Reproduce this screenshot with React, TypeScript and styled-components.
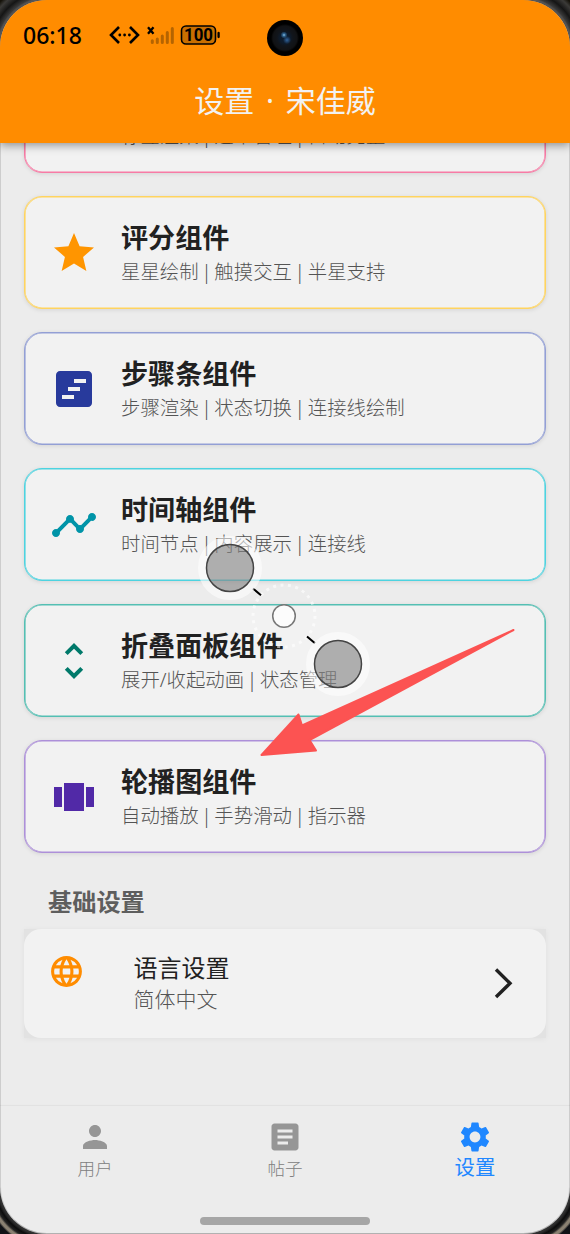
import React from 'react';
import styled, { createGlobalStyle } from 'styled-components';

const Global = createGlobalStyle`
  * { box-sizing: border-box; }
  body { margin: 0; font-family: "Noto Sans", "Noto Sans CJK SC", sans-serif; }
`;

const Device = styled.div`
  position: relative;
  width: 570px;
  height: 1234px;
  overflow: hidden;
  background:
    radial-gradient(circle at 49px 49px, transparent 49px, #777 50px, #3a3a3a 53px, #151515 58px, #3b3a38 64px, #15120a 68px) 0 0 / 49px 49px no-repeat,
    radial-gradient(circle at 0 49px, transparent 49px, #777 50px, #3a3a3a 53px, #151515 58px, #3b3a38 64px, #15120a 68px) 100% 0 / 49px 49px no-repeat,
    radial-gradient(circle at 49px 0, transparent 48px, #444 50px, #0c0c0c 54px, #222 57px, #8a8172 59px, #8a8172 61px, #111317 63px) 0 100% / 49px 49px no-repeat,
    radial-gradient(circle at 0 0, transparent 48px, #444 50px, #0c0c0c 54px, #222 57px, #8a8172 59px, #8a8172 61px, #111317 63px) 100% 100% / 49px 49px no-repeat,
    #777;
`;

const Screen = styled.div`
  display: flex;
  flex-direction: column;
  width: 570px;
  height: 1234px;
  border-radius: 47px;
  overflow: hidden;
  background: #ececec;
  box-shadow: 0 0 3px #111;
`;

const ScreenEdge = styled.div`
  position: absolute;
  inset: 0;
  border: 1px solid rgba(0, 0, 0, 0.25);
  border-left-color: rgba(0, 0, 0, 0.13);
  border-right-color: rgba(0, 0, 0, 0.13);
  border-radius: 47px;
  pointer-events: none;
`;

const Header = styled.header`
  position: relative;
  z-index: 1;
  flex: none;
  height: 143px;
  background: #ff8c00;
  box-shadow: 0 2px 9px rgba(0, 0, 0, 0.42);
`;

const StatusBar = styled.div`
  display: flex;
  align-items: center;
  height: 70px;
  padding-left: 23px;
`;

const Clock = styled.span`
  width: 86px;
  margin-top: -1px;
  font: 500 23px/30px "Noto Sans", sans-serif;
  color: #000;
`;

const StatusIcons = styled.svg`
  display: block;
  width: 114px;
  height: 30px;
  font: 700 18px Roboto, sans-serif;
`;

const Camera = styled.div`
  width: 36px;
  height: 36px;
  margin: 5px 0 0 43.5px;
  border-radius: 50%;
  background:
    radial-gradient(circle at 17px 15px, #8fc4e8 0, #2e618c 1.5px, transparent 3.5px),
    radial-gradient(circle at 20px 20px, #31639b 0, transparent 4px),
    radial-gradient(circle, #0d1b2c 0 5px, #11151b 8px, #111214 12px, #000 14px);
`;

const Title = styled.h1`
  margin: 0;
  font-size: 30px;
  line-height: 62px;
  font-weight: 400;
  text-align: center;
  word-spacing: 4px;
  color: #f2f2f2;
`;

const Content = styled.main`
  flex: 1;
  min-height: 0;
  overflow: hidden;
  padding: 0 24px;
`;

const CardList = styled.div`
  display: flex;
  flex-direction: column;
  gap: 23px;
  margin-top: -83px;
`;

const Card = styled.section<{ $line: string }>`
  display: flex;
  align-items: center;
  height: 113px;
  padding: 0 25px;
  border: 1px solid ${(p) => p.$line};
  border-radius: 18px;
  background: #f2f2f2;
  box-shadow: inset 0 0 0 0.6px ${(p) => p.$line}, 0 1px 4px rgba(0, 0, 0, 0.1);
`;

const Glyph = styled.svg<{ $size: number }>`
  display: block;
  flex: none;
  width: ${(p) => p.$size}px;
  height: ${(p) => p.$size}px;
  fill: ${(p) => p.color};
`;

const CardText = styled.div`
  margin-left: 23px;
  padding-top: 1px;
  white-space: nowrap;
`;

const CardTitle = styled.h2`
  margin: 0;
  font-size: 27.1px;
  line-height: 36px;
  font-weight: 700;
  color: #212121;
`;

const CardSub = styled.p`
  margin: 1px 0 0;
  font-size: 19.4px;
  line-height: 30px;
  font-weight: 300;
  word-spacing: -2.4px;
  color: #545454;
`;

const SectionTitle = styled.h3`
  margin: 31px 0 0 24px;
  font-size: 24.2px;
  line-height: 36px;
  font-weight: 700;
  color: #5e5e5e;
`;

const SettingPlate = styled.div`
  margin-top: 9px;
  background: #e2e2e2;
  box-shadow: 0 1px 6px rgba(0, 0, 0, 0.05);
`;

const SettingRow = styled.div`
  display: flex;
  align-items: center;
  height: 109px;
  padding: 0 33px 0 24px;
  border-radius: 17px;
  background: #f2f2f2;
`;

const GlobeBox = styled.div`
  width: 85.5px;
  padding-bottom: 25px;
`;

const SettingText = styled.div`
  flex: 1;
  padding-bottom: 1px;
`;

const SettingName = styled.div`
  font-size: 24px;
  line-height: 32px;
  color: #212121;
`;

const SettingValue = styled.div`
  font-size: 21px;
  line-height: 30px;
  font-weight: 300;
  color: #545454;
`;

const Chevron = styled.svg`
  width: 20px;
  height: 32px;
  margin-bottom: 1px;
  fill: none;
  stroke: #212121;
  stroke-width: 3.4;
`;

const TabBar = styled.nav`
  flex: none;
  display: flex;
  height: 100px;
  box-shadow: 0 -1px 1px rgba(0, 0, 0, 0.04);
`;

const Tab = styled.div<{ $active?: boolean }>`
  flex: 1;
  display: flex;
  flex-direction: column;
  align-items: center;
  padding-top: 13px;
  font-size: ${(p) => (p.$active ? 20.4 : 17.6)}px;
  font-weight: ${(p) => (p.$active ? 400 : 300)};
  line-height: ${(p) => (p.$active ? 25 : 26)}px;
  color: ${(p) => (p.$active ? '#1f87ff' : '#808080')};
`;

const HomeBar = styled.div`
  flex: none;
  width: 170px;
  height: 8px;
  margin: 11px auto 9px;
  border-radius: 4px;
  background: #a6a6a6;
`;

const Overlay = styled.svg`
  position: absolute;
  inset: 0;
  pointer-events: none;
`;

const paths = {
  star: 'M12 17.27 18.18 21l-1.64-7.03L22 9.24l-7.19-.61L12 2 9.19 8.63 2 9.24l5.46 4.73L5.82 21z',
  steps: 'M19 3H5c-1.1 0-2 .9-2 2v14c0 1.1.9 2 2 2h14c1.1 0 2-.9 2-2V5c0-1.1-.9-2-2-2zm-7 14H6v-2h6v2zm3-4H9v-2h6v2zm3-4h-6V7h6v2z',
  timeline: 'M23 8c0 1.1-.9 2-2 2-.18 0-.35-.02-.51-.07l-3.56 3.55c.05.16.07.34.07.52 0 1.1-.9 2-2 2s-2-.9-2-2c0-.18.02-.36.07-.52l-2.55-2.55c-.16.05-.34.07-.52.07s-.36-.02-.52-.07l-4.55 4.56c.05.16.07.33.07.51 0 1.1-.9 2-2 2s-2-.9-2-2 .9-2 2-2c.18 0 .35.02.51.07l4.56-4.55C8.02 9.36 8 9.18 8 9c0-1.1.9-2 2-2s2 .9 2 2c0 .18-.02.36-.07.52l2.55 2.55c.16-.05.34-.07.52-.07s.36.02.52.07l3.55-3.56C19.02 8.35 19 8.18 19 8c0-1.1.9-2 2-2s2 .9 2 2z',
  unfold: 'M12 5.83 15.17 9l1.41-1.41L12 3 7.41 7.59 8.83 9 12 5.83zm0 12.34L8.83 15l-1.41 1.41L12 21l4.59-4.59L15.17 15 12 18.17z',
  carousel: 'M2 7h4v10H2V7zm5 12h10V5H7v14zM18 7h4v10h-4V7z',
  globe: 'M11.99 2C6.47 2 2 6.48 2 12s4.47 10 9.99 10C17.52 22 22 17.52 22 12S17.52 2 11.99 2zm6.93 6h-2.95a15.65 15.65 0 0 0-1.38-3.56A8.03 8.03 0 0 1 18.92 8zM12 4.04c.83 1.2 1.48 2.53 1.91 3.96h-3.82c.43-1.43 1.08-2.76 1.91-3.96zM4.26 14C4.1 13.36 4 12.69 4 12s.1-1.36.26-2h3.38c-.08.66-.14 1.32-.14 2s.06 1.34.14 2H4.26zm.82 2h2.95c.32 1.25.78 2.45 1.38 3.56A7.987 7.987 0 0 1 5.08 16zm2.95-8H5.08a7.987 7.987 0 0 1 4.33-3.56A15.65 15.65 0 0 0 8.03 8zM12 19.96c-.83-1.2-1.48-2.53-1.91-3.96h3.82c-.43 1.43-1.08 2.76-1.91 3.96zM14.34 14H9.66c-.09-.66-.16-1.32-.16-2s.07-1.35.16-2h4.68c.09.65.16 1.32.16 2s-.07 1.34-.16 2zm.25 5.56c.6-1.11 1.06-2.31 1.38-3.56h2.95a8.03 8.03 0 0 1-4.33 3.56zM16.36 14c.08-.66.14-1.32.14-2s-.06-1.34-.14-2h3.38c.16.64.26 1.31.26 2s-.1 1.36-.26 2h-3.38z',
  person: 'M12 12c2.21 0 4-1.79 4-4s-1.79-4-4-4-4 1.79-4 4 1.79 4 4 4zm0 2c-2.67 0-8 1.34-8 4v2h16v-2c0-2.66-5.33-4-8-4z',
  article: 'M19 3H5c-1.1 0-2 .9-2 2v14c0 1.1.9 2 2 2h14c1.1 0 2-.9 2-2V5c0-1.1-.9-2-2-2zm-5 14H7v-2h7v2zm3-4H7v-2h10v2zm0-4H7V7h10v2z',
  gear: 'M19.14 12.94c.04-.3.06-.61.06-.94 0-.32-.02-.64-.07-.94l2.03-1.58a.49.49 0 0 0 .12-.61l-1.92-3.32a.488.488 0 0 0-.59-.22l-2.39.96c-.5-.38-1.03-.7-1.62-.94l-.36-2.54a.484.484 0 0 0-.48-.41h-3.84c-.24 0-.43.17-.47.41l-.36 2.54c-.59.24-1.13.57-1.62.94l-2.39-.96c-.22-.08-.47 0-.59.22L2.74 8.87c-.12.21-.08.47.12.61l2.03 1.58c-.05.3-.09.63-.09.94s.02.64.07.94l-2.03 1.58a.49.49 0 0 0-.12.61l1.92 3.32c.12.22.37.29.59.22l2.39-.96c.5.38 1.03.7 1.62.94l.36 2.54c.05.24.24.41.48.41h3.84c.24 0 .44-.17.47-.41l.36-2.54c.59-.24 1.13-.56 1.62-.94l2.39.96c.22.08.47 0 .59-.22l1.92-3.32c.12-.22.07-.47-.12-.61l-2.01-1.58zM12 15.6c-1.98 0-3.6-1.62-3.6-3.6s1.62-3.6 3.6-3.6 3.6 1.62 3.6 3.6-1.62 3.6-3.6 3.6z',
};

const Icon = ({ name, color, size }: { name: keyof typeof paths; color: string; size: number }) => (
  <Glyph viewBox="0 0 24 24" $size={size} color={color}>
    <path d={paths[name]} />
  </Glyph>
);

const cards: { icon: keyof typeof paths; color: string; line: string; title: string; sub: string }[] = [
  { icon: 'star', color: '#ff9500', line: '#ffd45f', title: '评分组件', sub: '星星绘制 | 触摸交互 | 半星支持' },
  { icon: 'steps', color: '#283a9c', line: '#939fd5', title: '步骤条组件', sub: '步骤渲染 | 状态切换 | 连接线绘制' },
  { icon: 'timeline', color: '#0094a8', line: '#4dd3e0', title: '时间轴组件', sub: '时间节点 | 内容展示 | 连接线' },
  { icon: 'unfold', color: '#00796a', line: '#54bfb3', title: '折叠面板组件', sub: '展开/收起动画 | 状态管理' },
  { icon: 'carousel', color: '#5129a7', line: '#ad90d9', title: '轮播图组件', sub: '自动播放 | 手势滑动 | 指示器' },
];

export default function App() {
  return (
    <Device>
      <Global />
      <Screen>
        <Header>
          <StatusBar>
            <Clock>06:18</Clock>
            <StatusIcons viewBox="0 0 114 30">
              <path d="M10 7 2 15l8 8M21 7l8 8-8 8" fill="none" stroke="#000" strokeWidth="2.6" />
              <g fill="#000">
                <circle cx="10.8" cy="15" r="1.4" />
                <circle cx="15.6" cy="15" r="1.4" />
                <circle cx="20.4" cy="15" r="1.4" />
              </g>
              <path d="m39 7.200 5.500 6.500M44.500 7.200 39 13.700" stroke="#000" strokeWidth="2.300" />
              <path d="M43.300 20.800v1.700M48.300 19v3.500M53.300 16v6.500M58.300 12.500v10M63.300 8.500v14" stroke="#b56400" strokeWidth="3" strokeLinecap="round" />
              <rect x="72.500" y="6" width="34" height="18" rx="4.500" fill="#c96f00" stroke="#000" strokeWidth="1.600" />
              <path d="M109.600 13v4" stroke="#000" strokeWidth="2.300" strokeLinecap="round" />
              <text x="89.500" y="21.300" textAnchor="middle" textLength="29" lengthAdjust="spacingAndGlyphs" fill="#000">100</text>
            </StatusIcons>
            <Camera />
          </StatusBar>
          <Title>设置 · 宋佳威</Title>
        </Header>
        <Content>
          <CardList>
            <Card $line="#f77ba5">
              <Glyph viewBox="0 0 24 24" $size={48} />
              <CardText>
                <CardTitle>日历组件</CardTitle>
                <CardSub>标签渲染 | 选中管理 | 自动完整</CardSub>
              </CardText>
            </Card>
            {cards.map((c) => (
              <Card key={c.title} $line={c.line}>
                <Icon name={c.icon} color={c.color} size={48} />
                <CardText>
                  <CardTitle>{c.title}</CardTitle>
                  <CardSub>{c.sub}</CardSub>
                </CardText>
              </Card>
            ))}
          </CardList>
          <SectionTitle>基础设置</SectionTitle>
          <SettingPlate>
            <SettingRow>
              <GlobeBox>
                <Icon name="globe" color="#ff8c00" size={37} />
              </GlobeBox>
              <SettingText>
                <SettingName>语言设置</SettingName>
                <SettingValue>简体中文</SettingValue>
              </SettingText>
              <Chevron viewBox="0 0 20 32">
                <path d="m3 2.500 14 13.800L3 30" />
              </Chevron>
            </SettingRow>
          </SettingPlate>
        </Content>
        <TabBar>
          <Tab>
            <Icon name="person" color="#969696" size={36} />
            用户
          </Tab>
          <Tab>
            <Icon name="article" color="#969696" size={36} />
            帖子
          </Tab>
          <Tab $active>
            <Icon name="gear" color="#1f87ff" size={36} />
            设置
          </Tab>
        </TabBar>
        <HomeBar />
      </Screen>
      <ScreenEdge />
      <Overlay width="570" height="1234" viewBox="0 0 570 1234">
        <circle cx="284" cy="616" r="31" fill="none" stroke="#fff" strokeOpacity=".6" strokeWidth="3" strokeDasharray="3 4.490" />
        <path d="m253 588.500 8 6.800M307 636.500l8 6.800" stroke="#000" strokeWidth="2" />
        {[[230, 568], [338, 664]].map(([x, y]) => (
          <g key={x}>
            <circle cx={x} cy={y} r="28" fill="none" stroke="#fff" strokeOpacity=".55" strokeWidth="8" />
            <circle cx={x} cy={y} r="23.500" fill="#868686" fillOpacity=".63" stroke="#444" strokeWidth="1.500" />
          </g>
        ))}
        <circle cx="284" cy="616" r="11.300" fill="#fcfcfc" stroke="#777" strokeWidth="1.500" />
        <path d="M513.500 630 302 725.500l-3.500-11L261.500 755l54.500-4.500-6.500-10.500z" fill="#fc5352" stroke="#fc5352" strokeWidth="2" strokeLinejoin="round" />
      </Overlay>
    </Device>
  );
}
